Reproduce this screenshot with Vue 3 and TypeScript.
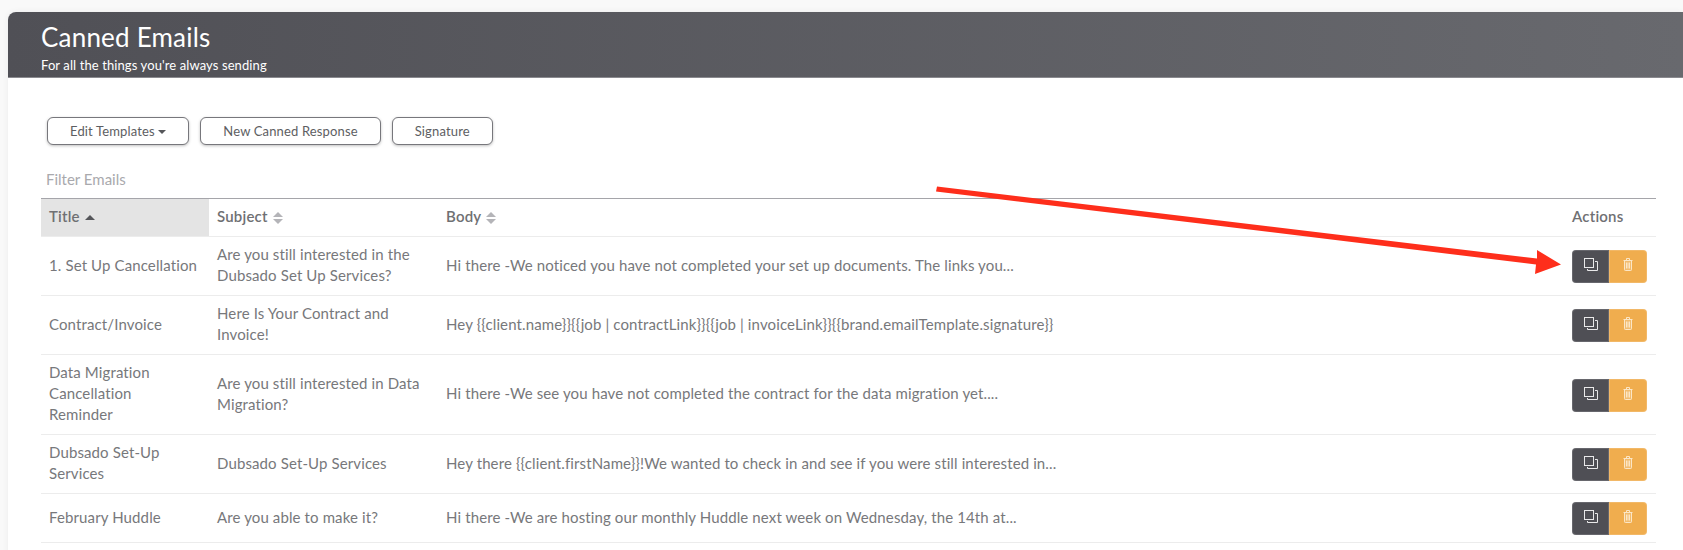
<template>
  <div class="page">
    <div class="card">
      <header class="banner">
        <h1>Canned Emails</h1>
        <p>For all the things you're always sending</p>
      </header>
      <div class="content">
        <div class="toolbar">
          <button class="btn">Edit Templates <span class="caret"></span></button>
          <button class="btn">New Canned Response</button>
          <button class="btn">Signature</button>
        </div>
        <input class="filter" placeholder="Filter Emails" />
        <table class="emails">
          <colgroup>
            <col style="width: 168px" />
            <col style="width: 229px" />
            <col />
            <col style="width: 92px" />
          </colgroup>
          <thead>
            <tr>
              <th class="sorted">Title <span class="sort-up"></span></th>
              <th>Subject <span class="sort-both"></span></th>
              <th>Body <span class="sort-both"></span></th>
              <th>Actions</th>
            </tr>
          </thead>
          <tbody>
            <tr v-for="row in rows" :key="row.title">
              <td class="title-cell">{{ row.title }}</td>
              <td>{{ row.subject }}</td>
              <td>{{ row.body }}</td>
              <td class="action-cell">
                <div class="actions">
                  <button class="act copy" title="Copy">
                    <svg width="14" height="13" viewBox="0 0 14 13" fill="none" stroke="currentColor" stroke-width="1">
                      <rect x="0.5" y="0.5" width="9" height="9" />
                      <polyline points="11 3.5 13.5 3.5 13.5 12.5 3.5 12.5 3.5 11" />
                    </svg>
                  </button>
                  <button class="act trash" title="Delete">
                    <svg width="10" height="13" viewBox="0 0 10 13" fill="none" stroke="currentColor" stroke-width="1">
                      <path d="M1.5 2.5h7v9.2a.8.8 0 0 1-.8.8H2.3a.8.8 0 0 1-.8-.8z" fill="rgba(255,255,255,0.18)" stroke="none" />
                      <path d="M0.5 2.5h9M3.5 2.5V.5h3v2M1.5 2.5v9.2a.8.8 0 0 0 .8.8h5.4a.8.8 0 0 0 .8-.8V2.5" />
                      <path d="M3.5 4.5v6M5 4.5v6M6.5 4.5v6" />
                    </svg>
                  </button>
                </div>
              </td>
            </tr>
          </tbody>
        </table>
      </div>
    </div>
    <svg class="arrow" width="1683" height="550" viewBox="0 0 1683 550">
      <polygon points="937,186.6 1537,258.6 1537,250 1561,264.5 1535,274 1536,264.5 936,191.4" fill="#fe2e1b" />
    </svg>
  </div>
</template>

<script setup lang="ts">
interface EmailRow {
  title: string
  subject: string
  body: string
}

const rows: EmailRow[] = [
  {
    title: '1. Set Up Cancellation',
    subject: 'Are you still interested in the Dubsado Set Up Services?',
    body: 'Hi there -We noticed you have not completed your set up documents. The links you...',
  },
  {
    title: 'Contract/Invoice',
    subject: 'Here Is Your Contract and Invoice!',
    body: 'Hey {{client.name}}{{job | contractLink}}{{job | invoiceLink}}{{brand.emailTemplate.signature}}',
  },
  {
    title: 'Data Migration Cancellation Reminder',
    subject: 'Are you still interested in Data Migration?',
    body: 'Hi there -We see you have not completed the contract for the data migration yet....',
  },
  {
    title: 'Dubsado Set-Up Services',
    subject: 'Dubsado Set-Up Services',
    body: 'Hey there {{client.firstName}}!We wanted to check in and see if you were still interested in...',
  },
  {
    title: 'February Huddle',
    subject: 'Are you able to make it?',
    body: 'Hi there -We are hosting our monthly Huddle next week on Wednesday, the 14th at...',
  },
]
</script>

<style>
html,
body {
  margin: 0;
  background: #f9f9f9;
  overflow: hidden;
}
</style>

<style scoped>
.page {
  position: relative;
  height: 550px;
  overflow: hidden;
  padding: 12px 0 0 8px;
  box-sizing: border-box;
  font-family: Lato, 'Open Sans', sans-serif;
  color: #77787b;
}

.card {
  background: #fff;
  height: 560px;
  border-radius: 8px 0 0 0;
  box-shadow: 0 0 6px rgba(0, 0, 0, 0.06);
}

.banner {
  height: 66px;
  box-sizing: border-box;
  padding: 10px 0 0 33px;
  background: linear-gradient(90deg, #505056, #68696e);
  border-bottom: 1px solid #8a8a8f;
  border-radius: 8px 0 0 0;
  color: #fff;
}

.banner h1 {
  margin: 0;
  font-size: 26px;
  line-height: 30px;
  font-weight: 400;
  letter-spacing: 0.2px;
}

.banner p {
  margin: 5px 0 0;
  font-size: 13px;
  line-height: 16px;
  letter-spacing: 0.1px;
}

.content {
  padding: 39px 27px 0 33px;
}

.toolbar {
  display: flex;
  gap: 11px;
  padding-left: 6px;
}

.btn {
  height: 28px;
  padding: 0 22px;
  background: #fff;
  border: 1px solid #77777c;
  border-radius: 6px;
  box-shadow: 0 1px 3px rgba(0, 0, 0, 0.25);
  font: inherit;
  font-size: 13px;
  letter-spacing: 0.15px;
  color: #5d5e62;
}

.caret {
  display: inline-block;
  margin-left: 0;
  vertical-align: 2px;
  border: 4px solid transparent;
  border-top: 4px solid #55565a;
  border-bottom: 0;
}

.filter {
  display: block;
  box-sizing: border-box;
  width: 100%;
  height: 53px;
  padding: 14px 0 0 5px;
  border: 0;
  outline: 0;
  background: transparent;
  font: inherit;
  font-size: 15px;
}

.filter::placeholder {
  color: #a9a9ad;
  opacity: 1;
}

.emails {
  width: 100%;
  table-layout: fixed;
  border-collapse: collapse;
  border-top: 1px solid #a5a5aa;
  font-size: 15px;
  line-height: 21px;
  letter-spacing: 0.12px;
}

.emails th {
  height: 38px;
  padding: 0 8px 2px;
  box-sizing: border-box;
  text-align: left;
  font-weight: 600;
  letter-spacing: 0.2px;
  color: #6f7073;
  border-bottom: 1px solid #ececec;
}

.emails th.sorted {
  background: #e4e4e4;
}

.emails td {
  padding: 7px 8px 9px;
  vertical-align: middle;
  border-bottom: 1px solid #ececec;
}

.emails td.title-cell {
  padding-right: 11px;
}

.emails td.action-cell {
  padding: 8px 8px 7px;
}

.sort-up,
.sort-both {
  display: inline-block;
  position: relative;
  width: 10px;
  height: 13px;
  vertical-align: -2px;
  margin-left: 1px;
}

.sort-up::before,
.sort-both::before,
.sort-both::after {
  content: '';
  position: absolute;
  left: 0;
  border-left: 5px solid transparent;
  border-right: 5px solid transparent;
}

.sort-up::before {
  top: 4px;
  border-bottom: 5px solid #55565a;
}

.sort-both::before {
  top: 1px;
  border-bottom: 5px solid #b4b4b8;
}

.sort-both::after {
  top: 8px;
  border-top: 5px solid #b4b4b8;
}

.actions {
  display: flex;
}

.act {
  display: flex;
  align-items: center;
  justify-content: center;
  height: 33px;
  padding: 0 0 4px;
  border: 0;
  box-shadow: inset 0 0 0 1px rgba(255, 255, 255, 0.14);
}

.copy {
  width: 37px;
  background: #4f4f55;
  border-radius: 4px 0 0 4px;
  color: #e9e9ea;
}

.trash {
  width: 38px;
  background: #f0ad4e;
  border-radius: 0 4px 4px 0;
  color: #fbe6c6;
}

.arrow {
  position: absolute;
  top: 0;
  left: 0;
  pointer-events: none;
}
</style>
